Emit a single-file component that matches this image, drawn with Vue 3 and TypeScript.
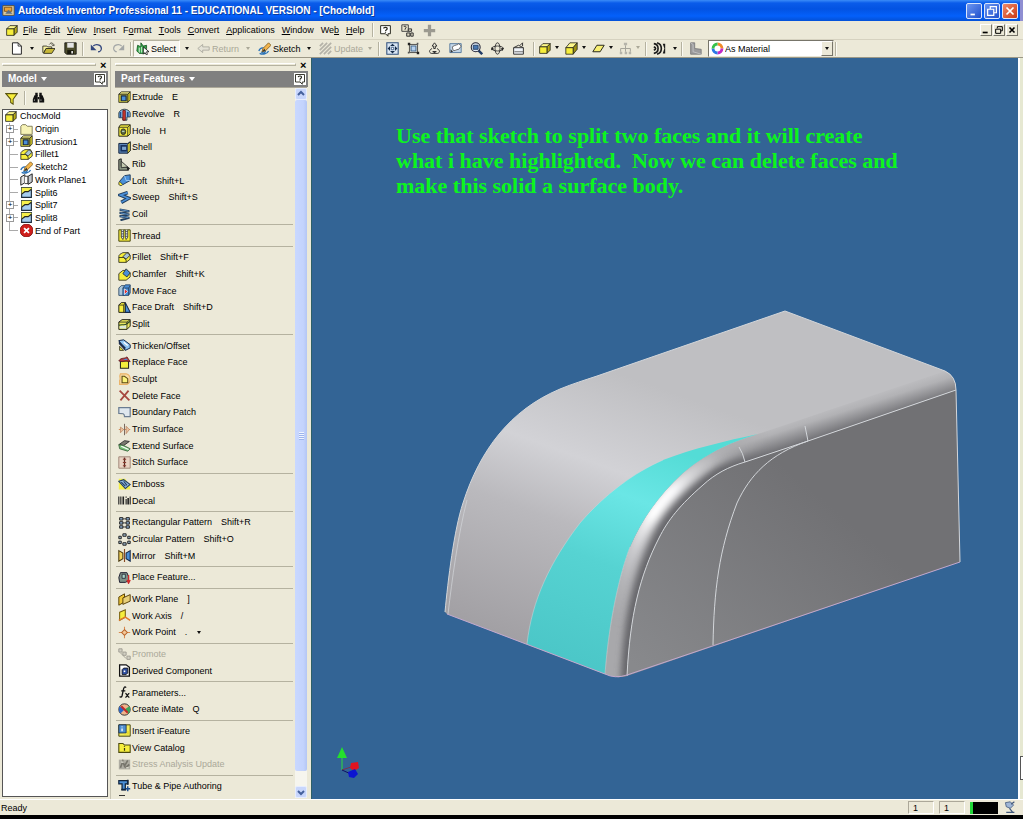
<script setup lang="ts">
import { ref } from 'vue'

type Shape = [d: string, fill?: string, stroke?: string, width?: number]
interface Feature { icon: string; label: string; key?: string; off?: boolean; more?: boolean }
interface TreeNode { icon: string; label: string; expandable?: boolean }

const Y = '#f6ee3c'
const K = '#26261c'
const B = '#4a8fd8'
const N = '#24405f'

const cube: Shape[] = [
  ['M2 6L6 2H15L11 6Z', '#fdf88a', K],
  ['M11 6L15 2V10L11 14Z', '#b8ac18', K],
  ['M2 6H11V14H2Z', Y, K],
]

const icons: Record<string, Shape[]> = {
  cube,
  app: [['M1 2H15V14H1Z', '#d7c9a0', '#5a4a2a'], ['M3 4H12V9H3Z', '#e8a33a', '#7a4a10'], ['M4 12L8 7L13 12Z', '#5d6f86']],
  help: [['M2 2H14V12H11V15L8 12H2Z', '#fff', K, 1.2], ['M5.5 5.5C6 3.5 10.500 3.500 10 6C9.800 7.300 8 7 8 9M8 10V11', 'none', K, 1.5]],
  whats: [['M1 1H9V9H1Z', '#e8e4cf', '#444', 1.2], ['M3.500 3.500C4 2 7 2.500 6 5L5 6V7', 'none', '#222', 1.2], ['M9 6H13V9H9ZM7 11H11V15H7ZM12 11H15V15H12Z', '#d8d4bf', '#333', 1.2]],
  plus: [['M6 1H10V6H15V10H10V15H6V10H1V6H6Z', '#9c9a90']],
  page: [['M3 1H10L14 5V15H3Z', '#fff', '#222', 1.2], ['M10 1V5H14', 'none', '#222']],
  open: [['M1 5H6L7 6H12V8H5L2 13H1Z', '#f6f0a0', K], ['M2 14L5 8H16L12 14Z', '#c8b838', K], ['M9 3C11 0 14 1 14 4M12 3L14 5L16 3', 'none', K]],
  save: [['M1 1H15V15H3L1 13Z', '#4c4c2c', '#111'], ['M4 1H12V7H4Z', '#e4e4e4'], ['M4 10H12V15H4Z', '#18180c'], ['M9 11H11V14H9Z', '#eee']],
  undo: [['M4 5C7 2 14 3 14 8C14 10 12 12 10 12', 'none', '#33477e', 1.6], ['M1 3V10H8Z', '#33477e']],
  redo: [['M12 5C9 2 2 3 2 8C2 10 4 12 6 12', 'none', '#a3a6a6', 1.4], ['M15 3V10H8Z', '#a3a6a6']],
  select: [['M2 4L6 6V1L9 5L13 4V8L11 14H4L1 11Z', '#36a84b', '#125421'], ['M4 7V13M7 6V13', 'none', '#fff'], ['M9 6V15L11 13L13 16L14 15L13 12H16Z', '#fff', '#111']],
  back: [['M1 8L7 3V6H15V10H7V13Z', '#e4e2d6', '#a5a49a']],
  sketch: [['M1 11C3 6 8 6 9 10C10 14 5 14 4 12M2 14C6 16 11 15 13 11', 'none', '#2b73b8', 1.6], ['M6 8L13 1L16 4L9 11L5 12Z', '#f4b44a', '#7a5a20'], ['M5 12L8 8L9 11Z', '#333']],
  update: [['M1 5L5 1M1 10L10 1M1 15L15 1M6 15L15 6M11 15L15 11', 'none', '#b4b2a8', 2]],
  zoomall: [['M1 1H15V15H1Z', '#d9e6f4', '#30507c', 1.3], ['M8 2L11 5H5ZM8 14L11 11H5ZM2 8L5 5V11ZM14 8L11 5V11Z', '#152c4a'], ['M6.500 6.500H9.500V9.500H6.500Z', '#fff', '#30507c']],
  zoomwin: [['M3 3H13V13H3Z', 'none', '#333', 1], ['M5 5H11V11H5Z', '#b8d2ee', '#456b95', 1.3], ['M1 1H4V4H1ZM12 12H15V15H12Z', '#222'], ['M12 1H14V3H12ZM1 12H3V14H1Z', '#555']],
  zoom: [['M8 1L11 5H9V8H7V5H5ZM5 8C1 10 1 13 4 14H12C15 13 15 10 11 8', 'none', '#333', 1.2], ['M5 11L8 14L11 11Z', '#333']],
  pan: [['M1 2H15V13H1Z', '#c5d7e8', '#456b95'], ['M4 6C8 3 11 4 12 2L15 5L12 9C9 9 6 12 5 10Z', '#fff', '#555'], ['M2 13V9L5 12Z', '#333']],
  zoomsel: [['M10 10L15 15', 'none', '#223c66', 3], ['M7 1A5.500 5.500 0 1 0 7 12A5.500 5.500 0 1 0 7 1Z', '#e3eef9', '#223', 1.3], ['M4 4H10V9H4Z', '#4a79b4', '#1c3558']],
  orbit: [['M8 1C12 1 12 15 8 15C4 15 4 1 8 1M1 8C1 4 15 4 15 8C15 12 1 12 1 8', 'none', '#333', 1.2], ['M6 6H10V10H6Z', '#ece9d8'], ['M1 6L4 9L0 10ZM12 8L16 7L14 11Z', '#222']],
  look: [['M2 7H14V15H2Z', '#eef3f8', '#333', 1.2], ['M2 7L8 4L14 7M10 4L13 1V5', 'none', '#333', 1.2], ['M3 12H14', 'none', '#555']],
  shaded: cube,
  solid: [['M1 7L6 1H15L10 7Z', '#fdf88a', K], ['M10 7L15 1V9L10 15Z', '#9a9012', K], ['M1 7H10V15H1Z', Y, K]],
  plane: [['M1 12L6 4H15L10 12Z', '#f8ef72', K, 1.2]],
  tree: [['M8 4V8M2 12V8H14V12M8 8V12', 'none', '#a5a49a', 1.2], ['M6 1H10V4H6ZM1 12H4V15H1ZM7 12H10V15H7ZM12 12H15V15H12Z', '#b5b4aa']],
  waves: [['M1 2C8 3 8 13 1 14M5 1C12 3 12 13 5 15M1 6C4 7 4 9 1 10', 'none', '#1c1c1c', 2], ['M12 2H15V14H12L14 8Z', '#1c1c1c']],
  corner: [['M2 1H7V8L15 9V15H2Z', '#9b9b9d', '#77777a'], ['M2 1L5 3V12L15 15', 'none', '#c7c7c9']],
  ring: [
    ['M8 2.500A5.500 5.500 0 0 1 13.500 8', 'none', '#f08a2a', 3.500],
    ['M13.500 8A5.500 5.500 0 0 1 8 13.500', 'none', '#c22ac8', 3.500],
    ['M8 13.500A5.500 5.500 0 0 1 2.500 8', 'none', '#2b78e6', 3.500],
    ['M2.500 8A5.500 5.500 0 0 1 8 2.500', 'none', '#35c24a', 3.500],
  ],
  filter: [['M1 2H15L10 9V15L7 13V9Z', '#f8ee3a', '#5a5410', 1.3]],
  binoc: [['M3 4H7V13H1V9ZM9 4H13L15 9V13H9Z', '#111'], ['M4 1H7V5H4ZM9 1H12V5H9ZM7 6H9V9H7Z', '#111'], ['M3 9V11M11 9V11', 'none', '#aaa']],
  folder: [['M1 4L3 2H7L9 4H15V14H1Z', '#f7f3b6', '#6b6740']],
  extrude: [['M1 4L4 1H15L12 4Z', '#faf48a', K], ['M12 4L15 1V11L12 14Z', '#e8dc2a', K], ['M1 4H12V14H1Z', '#e6dd3c', K], ['M4 6H10V12H4Z', B, '#14284a', 1.5]],
  fillet: [['M1 7C1 4 3 4 6 2H13L15 6V10L10 14H1Z', Y, K], ['M6 7L11 2L15 5L10 10Z', '#a8c4d8', K], ['M1 8H7L10 11V14', 'none', K]],
  chamfer: [['M1 7L6 3H11L15 6V11L10 15H1Z', Y, K], ['M6 7L10 1L15 6L11 11Z', B, K]],
  wplane: [['M1 5L6 2V12L1 15Z', '#e6e6e6', '#222', 1.2], ['M6 4H10V13H6', '#fafafa', '#222'], ['M10 4L15 1V11L10 14Z', '#c4c9cf', '#222', 1.2]],
  tsplit: [['M2 2H14V14H2Z', '#a6cdf0', '#1c2c3c', 1.4], ['M2 2H14V4L10 7H6L2 10Z', '#f6f04a'], ['M2 10L6 7H10L14 4', 'none', K, 1.4]],
  stop: [['M8 0A8 8 0 1 0 8 16A8 8 0 1 0 8 0Z', '#cf1f1c', '#7c0c0a'], ['M5 5L11 11M11 5L5 11', 'none', '#fff', 2.200]],
  revolve: [['M1 6C3 0 13 0 15 6V11H11V15H6V12H1Z', '#8ab8e8', '#233'], ['M6 3H9V15H6Z', '#d33a30', '#611'], ['M3 5V12M12 5V11', 'none', '#1d4f93', 2]],
  hole: [['M1 4L3 1H15V12L12 15H1Z', Y, K, 1.2], ['M1 4H12V15M12 4L15 1', 'none', K], ['M6.500 6A3 3.500 0 1 0 6.500 13A3 3.500 0 1 0 6.500 6Z', '#5f6d40', '#222'], ['M5 9H8', 'none', '#dff']],
  shell: [['M1 3H12L15 1V12L12 15H1Z', '#5c86b8', '#142440', 1.2], ['M12 4L15 1V12L12 15Z', '#e8df3a', K], ['M3 5H11V13H3Z', '#16305e'], ['M5 7H10V11H5Z', '#7ca4cf']],
  rib: [['M1 2L4 1V10L13 12V15H1Z', '#8f9a86', '#222', 1.2], ['M4 4L12 11L4 12Z', '#c4cbb0', '#222'], ['M11 10L15 13L11 15Z', '#222']],
  loft: [['M1 12C1 7 6 8 6 12C6 15 1 15 1 12Z', Y, K], ['M2 9L8 2L15 1V8L6 13Z', B, N, 1.2], ['M8 2L10 8L15 8', 'none', '#a8d0f4']],
  sweep: [['M12 2L3 5L13 9L4 14', 'none', N, 4.500], ['M12 2L3 5L13 9L4 14', 'none', B, 2]],
  coil: [['M2 2L14 4L2 6L14 8L2 10L14 12L3 15', 'none', N, 2.600], ['M3 2L13 4M3 6L13 8M3 10L13 12', 'none', '#6aa4dc', 1]],
  thread: [['M1 1H15V15H1Z', Y, '#4a4810', 1.2], ['M4 1V10L6 13L7 10V1M9 1V10L10 13L12 10V1', '#dce4ea', '#333'], ['M4 3H7M4 6H7M9 3H12M9 6H12M4 9H7M9 9H12', 'none', '#444']],
  moveface: [['M1 5L4 2H8V14H1Z', '#a9c6dc', N], ['M6 5L9 1H15V11L13 14H6Z', B, N], ['M6 5H13L15 2M13 5V14', 'none', N], ['M8 6L12 9L8 13Z', '#e03030', '#fff', .8]],
  draft: [['M1 5L4 2H9V14H1Z', Y, K, 1.2], ['M9 2L15 14H9Z', B, '#14284a', 1.3], ['M1 5H7L9 2M7 5V14', 'none', K]],
  split: [['M1 5L5 2H15V10L11 14H1Z', '#e9e65c', K, 1.2], ['M1 9C5 7 8 10 11 7L15 4', 'none', '#2a4a2a', 1.4], ['M1 5H11V14M11 5L15 2', 'none', K], ['M2 10L10 9V13H2Z', '#dce8d8']],
  thicken: [['M1 2L7 1L15 7V11L9 14Z', '#8fc4f0', '#14284a', 1.2], ['M1 2L9 10V14L1 6Z', '#1c2c4c'], ['M2 9L7 14H2Z', Y, K], ['M7 4L12 8', 'none', '#fff', 1.4]],
  replace: [['M3 6H13V15H3Z', Y, K, 1.3], ['M1 6C4 1 9 4 11 1L15 7L10 6L5 7Z', '#b63a3e', '#5a1a20'], ['M6 5L10 3L12 5Z', '#4b8fd8']],
  sculpt: [['M3 1H10C17 3 16 12 11 14H2V9C4 7 1 5 3 1Z', '#f8dca6', '#eab266', 1.4], ['M5 4H8L12 7V12H5Z', '#fbf27a', '#5a4a10', 1.3]],
  delete: [['M2 2L14 14M13 2L3 14', 'none', '#a84840', 2.200]],
  patch: [['M1 2H15V13H8C8 9 6 9 1 9Z', '#dfe7ee', '#6a7c92', 1.5]],
  trim: [['M1 8H15', 'none', '#d58a58', 1.3], ['M8 1V15', 'none', '#7a6a60', 1.3], ['M3 5L7 8L3 12ZM10 4L14 8L10 13Z', '#e9c3a0', '#c08a68']],
  extend: [['M1 7L8 2L14 3L7 8Z', '#7a7a70', '#222'], ['M1 7L7 8L15 12L12 15L2 12Z', '#7ac47a', '#35603a'], ['M4 9L13 13', 'none', '#fff', 1.4]],
  stitch: [['M1 1H15V15H1Z', '#ead4c4', '#a08878', 1.2], ['M8 2V14', 'none', '#5a2a20', 1.6], ['M6 4H10M6 8H10M6 12H10', 'none', '#8a3a30', 1.4]],
  emboss: [['M1 1H9L15 11V14H1Z', '#f4f04a'], ['M1 4L7 2L15 8L9 13Z', '#8fb8e0', N, 1.3], ['M4 5L9 10M7 4L11 9', 'none', N, 1.4]],
  decal: [['M1 3V13M3.500 3V13M10 6V13M15 3V13', 'none', '#222', 1.4], ['M6.500 3V13M12.500 5V13', 'none', '#222', 2], ['M10 3V4.500', 'none', '#222', 1.4]],
  rect: [['M2 2H6V5H2ZM10 2H14V5H10ZM2 7H6V10H2ZM10 7H14V10H10ZM2 12H6V15H2ZM10 12H14V15H10Z', '#8fb0d4', '#222', 1.2], ['M6 3.500H10M6 8.500H10M6 13.500H10', 'none', '#222']],
  circ: [['M6 1H10V4H6ZM1 4H4V7H1ZM12 4H15V7H12ZM1 10H4V13H1ZM12 10H15V13H12ZM6 12H10V15H6Z', '#9db8cc', '#222', 1.2]],
  mirror: [['M1 2L6 5V12L1 15Z', '#f2d25a', '#4a3a10', 1.3], ['M8 0V16', 'none', '#8a4a20', 1.4], ['M15 2L10 5V12L15 15Z', B, '#14284a', 1.3]],
  place: [['M1 8L3 2H11L13 7V12L9 14H2Z', '#7d8f86', '#223', 1.2], ['M5 4H9V9H5Z', '#a8d4c8', '#223'], ['M13 5V13M11 11L13 15L15 11', 'none', '#d02828', 1.6]],
  workplane: [['M1 5L8 1V11L1 15Z', '#f0c838', '#5a4208', 1.2], ['M6 6L15 2V10L6 14Z', '#e8cf78', '#5a4208', 1.2]],
  workaxis: [['M2 4L9 1V10L2 14Z', Y, '#7a6210', 1.3], ['M1 14L9 10L15 14', 'none', '#e07a2a', 1.8]],
  workpoint: [['M8 1V15M1 8H15', 'none', '#d98a4e', 1.3], ['M8 4.500L11.500 8L8 11.500L4.500 8Z', '#f2c898', '#b8622a', 1.3]],
  promote: [['M1 1H5V5H1ZM6 5H10V9H6ZM11 10H15V14H11Z', '#d4d1c4', '#a09e94', 1.2], ['M3 6L10 13', 'none', '#a09e94', 1.2]],
  derived: [['M2 1H10L14 4V15H2Z', '#fff', '#111', 1.6], ['M5 7L7 5H12V11L10 13H5Z', '#2c4c9c', '#111'], ['M7 8H9V10H7Z', '#fff']],
  params: [['M10 2C8 0 7 2 6.500 5L5 12C4.500 14 3 14 2 13M4 6H9', 'none', '#111', 1.6], ['M9 9C11 9 12 14 14 14M14 9C12 9 11 14 9 14', 'none', '#111', 1.4]],
  imate: [['M8 1A7 7 0 1 0 8 15A7 7 0 1 0 8 1Z', '#f0b48a', '#333', 1.2], ['M2 4L8 8L3 13C0 10 1 6 2 4Z', '#2c66c4'], ['M14 4L8 8L13 13C16 10 15 6 14 4Z', '#3ca858'], ['M4 4L12 12', 'none', '#c02a2a', 2.400]],
  ifeature: [['M1 1H15V15H1Z', '#f4ec5a', '#4a4810', 1.2], ['M1 1H10V11H1Z', '#4f8fd0', '#14284a'], ['M5 3V4M5 5.500V9', 'none', '#fff', 1.6], ['M11 9H14V13H7V12H11Z', '#e8dc2a']],
  catalog: [['M1 3H6L8 5H15V14H1Z', Y, '#4a4810', 1.3], ['M8 6V7M8 8.500V12', 'none', '#3a3810', 1.5]],
  stress: [['M1 2H15V14H1Z', '#aeaca2'], ['M3 12L6 4L8 10L12 3M9 12L14 8', 'none', '#77756c', 2], ['M4 5H7M10 12H13', 'none', '#e8e6da', 1.4]],
  tube: [['M1 2H12V6H9V13H5V6H1Z', B, '#10243e', 1.5], ['M12 1V7M4 13H10', 'none', '#10243e', 2], ['M12 9V15M9.500 12H15', 'none', '#1c4f93', 1.8]],
}

const menus: [string, string, string][] = [
  ['', 'F', 'ile'], ['', 'E', 'dit'], ['', 'V', 'iew'], ['', 'I', 'nsert'], ['F', 'o', 'rmat'], ['', 'T', 'ools'],
  ['', 'C', 'onvert'], ['', 'A', 'pplications'], ['', 'W', 'indow'], ['We', 'b', ''], ['', 'H', 'elp'],
]

const commands = [
  { icon: 'select', label: 'Select', on: true },
  { icon: 'back', label: 'Return', off: true },
  { icon: 'sketch', label: 'Sketch' },
  { icon: 'update', label: 'Update', off: true },
]
const viewTools = [
  ['zoomall', 'Zoom All'], ['zoomwin', 'Zoom Window'], ['zoom', 'Zoom'], ['pan', 'Pan'],
  ['zoomsel', 'Zoom Selected'], ['orbit', 'Rotate'], ['look', 'Look At'],
]
const displayTools = [['shaded', 'Shaded Display'], ['solid', 'Camera'], ['plane', 'Ground Shadow'], ['tree', 'Component Opacity']]

const tree: TreeNode[] = [
  { icon: 'folder', label: 'Origin', expandable: true },
  { icon: 'extrude', label: 'Extrusion1', expandable: true },
  { icon: 'fillet', label: 'Fillet1' },
  { icon: 'sketch', label: 'Sketch2' },
  { icon: 'wplane', label: 'Work Plane1' },
  { icon: 'tsplit', label: 'Split6' },
  { icon: 'tsplit', label: 'Split7', expandable: true },
  { icon: 'tsplit', label: 'Split8', expandable: true },
  { icon: 'stop', label: 'End of Part' },
]

const groups: Feature[][] = [
  [
    { icon: 'extrude', label: 'Extrude', key: 'E' }, { icon: 'revolve', label: 'Revolve', key: 'R' },
    { icon: 'hole', label: 'Hole', key: 'H' }, { icon: 'shell', label: 'Shell' }, { icon: 'rib', label: 'Rib' },
    { icon: 'loft', label: 'Loft', key: 'Shift+L' }, { icon: 'sweep', label: 'Sweep', key: 'Shift+S' }, { icon: 'coil', label: 'Coil' },
  ],
  [{ icon: 'thread', label: 'Thread' }],
  [
    { icon: 'fillet', label: 'Fillet', key: 'Shift+F' }, { icon: 'chamfer', label: 'Chamfer', key: 'Shift+K' },
    { icon: 'moveface', label: 'Move Face' }, { icon: 'draft', label: 'Face Draft', key: 'Shift+D' }, { icon: 'split', label: 'Split' },
  ],
  [
    { icon: 'thicken', label: 'Thicken/Offset' }, { icon: 'replace', label: 'Replace Face' }, { icon: 'sculpt', label: 'Sculpt' },
    { icon: 'delete', label: 'Delete Face' }, { icon: 'patch', label: 'Boundary Patch' }, { icon: 'trim', label: 'Trim Surface' },
    { icon: 'extend', label: 'Extend Surface' }, { icon: 'stitch', label: 'Stitch Surface' },
  ],
  [{ icon: 'emboss', label: 'Emboss' }, { icon: 'decal', label: 'Decal' }],
  [
    { icon: 'rect', label: 'Rectangular Pattern', key: 'Shift+R' }, { icon: 'circ', label: 'Circular Pattern', key: 'Shift+O' },
    { icon: 'mirror', label: 'Mirror', key: 'Shift+M' },
  ],
  [{ icon: 'place', label: 'Place Feature...' }],
  [
    { icon: 'workplane', label: 'Work Plane', key: ']' }, { icon: 'workaxis', label: 'Work Axis', key: '/' },
    { icon: 'workpoint', label: 'Work Point', key: '.', more: true },
  ],
  [{ icon: 'promote', label: 'Promote', off: true }, { icon: 'derived', label: 'Derived Component' }],
  [{ icon: 'params', label: 'Parameters...' }, { icon: 'imate', label: 'Create iMate', key: 'Q' }],
  [
    { icon: 'ifeature', label: 'Insert iFeature' }, { icon: 'catalog', label: 'View Catalog' },
    { icon: 'stress', label: 'Stress Analysis Update', off: true },
  ],
  [{ icon: 'tube', label: 'Tube & Pipe Authoring' }],
]

const note = `Use that sketch to split two faces and it will create
what i have highlighted.  Now we can delete faces and
make this solid a surface body.`

const color = ref('As Material')

const Icon = (props: { name: string }) =>
  h('svg', { class: 'icon', viewBox: '0 0 16 16', 'aria-hidden': 'true' },
    (icons[props.name] ?? []).map(([d, fill = 'none', stroke = 'none', width = 1]) =>
      h('path', { d, fill, stroke, 'stroke-width': width })))
Icon.props = ['name']
</script>

<script lang="ts">
import { h } from 'vue'
</script>

<template>
  <div class="window">
    <header class="titlebar">
      <Icon name="app" />
      <h1>Autodesk Inventor Professional 11 - EDUCATIONAL VERSION - [ChocMold]</h1>
      <div class="caption">
        <button aria-label="Minimize"><svg viewBox="0 0 16 16"><path d="M4 11H9V13H4Z" fill="#fff" /></svg></button>
        <button aria-label="Restore"><svg viewBox="0 0 16 16"><path d="M6 6V3H13V10H10M3 6H10V13H3Z" fill="none" stroke="#fff" stroke-width="1.400" /></svg></button>
        <button class="close" aria-label="Close"><svg viewBox="0 0 16 16"><path d="M4 4L12 12M12 4L4 12" stroke="#fff" stroke-width="2" /></svg></button>
      </div>
    </header>

    <nav class="menubar" aria-label="Menu">
      <Icon name="cube" />
      <button v-for="m in menus" :key="m.join('')" class="menu">{{ m[0] }}<u>{{ m[1] }}</u>{{ m[2] }}</button>
      <i class="rule"></i>
      <button class="tool" aria-label="Help Topics"><Icon name="help" /></button>
      <button class="tool" aria-label="What's New"><Icon name="whats" /></button>
      <button class="tool" aria-label="Add"><Icon name="plus" /></button>
      <div class="child">
        <button aria-label="Minimize document"><svg viewBox="0 0 12 12"><path d="M2 9H8" stroke="#000" stroke-width="2" /></svg></button>
        <button aria-label="Restore document"><svg viewBox="0 0 12 12"><path d="M4 4V2H10V7H8M2 5H8V10H2Z" fill="none" stroke="#000" stroke-width="1.200" /></svg></button>
        <button aria-label="Close document"><svg viewBox="0 0 12 12"><path d="M3 3L9 9M9 3L3 9" stroke="#000" stroke-width="2" /></svg></button>
      </div>
    </nav>

    <div class="toolbar" role="toolbar" aria-label="Standard">
      <button class="tool" aria-label="New"><Icon name="page" /></button>
      <button class="drop" aria-label="New options"></button>
      <button class="tool" aria-label="Open"><Icon name="open" /></button>
      <button class="tool" aria-label="Save"><Icon name="save" /></button>
      <i class="rule"></i>
      <button class="tool" aria-label="Undo"><Icon name="undo" /></button>
      <button class="tool" aria-label="Redo" disabled><Icon name="redo" /></button>
      <i class="rule"></i>
      <template v-for="c in commands" :key="c.label">
        <button class="command" :class="{ on: c.on }" :disabled="c.off"><Icon :name="c.icon" />{{ c.label }}</button>
        <button class="drop wide" :disabled="c.off" :aria-label="c.label + ' options'"></button>
      </template>
      <i class="rule"></i>
      <div class="views">
        <button v-for="v in viewTools" :key="v[0]" class="tool" :aria-label="v[1]"><Icon :name="v[0]" /></button>
      </div>
      <i class="rule"></i>
      <div v-for="v in displayTools" :key="v[0]" class="display">
        <button class="tool" :aria-label="v[1]" :disabled="v[0] === 'tree'"><Icon :name="v[0]" /></button>
        <button class="drop" :aria-label="v[1] + ' options'" :disabled="v[0] === 'tree'"></button>
      </div>
      <i class="rule"></i>
      <button class="tool" aria-label="Analysis"><Icon name="waves" /></button>
      <button class="drop" aria-label="Analysis options"></button>
      <i class="rule"></i>
      <button class="tool" aria-label="Section"><Icon name="corner" /></button>
      <label class="material">
        <Icon name="ring" />
        <select v-model="color" aria-label="Color"><option>As Material</option></select>
        <span class="drop"></span>
      </label>
      <i class="rule"></i>
    </div>

    <main class="work">
      <aside class="panel">
        <div class="grip"><i></i><button aria-label="Close Model">×</button></div>
        <div class="heading"><button class="name">Model</button><button class="ask" aria-label="Model help"><Icon name="help" /></button></div>
        <div class="filters">
          <button aria-label="Filter"><Icon name="filter" /></button><i class="rule"></i><button aria-label="Find"><Icon name="binoc" /></button>
        </div>
        <div class="browser">
          <ul class="tree">
            <li class="root"><Icon name="cube" /><span>ChocMold</span></li>
            <li v-for="n in tree" :key="n.label" class="node">
              <span class="branch"><button v-if="n.expandable" :aria-label="'Expand ' + n.label">+</button></span>
              <Icon :name="n.icon" /><span>{{ n.label }}</span>
            </li>
          </ul>
        </div>
      </aside>

      <aside class="panel features">
        <div class="grip"><i></i><button aria-label="Close Part Features">×</button></div>
        <div class="heading"><button class="name">Part Features</button><button class="ask" aria-label="Part Features help"><Icon name="help" /></button></div>
        <div class="scroller">
          <div class="list">
            <template v-for="(g, i) in groups" :key="i">
              <hr v-if="i > 0" />
              <button v-for="f in g" :key="f.label" class="feature" :disabled="f.off">
                <Icon :name="f.icon" />{{ f.label }}<kbd v-if="f.key">{{ f.key }}</kbd><span v-if="f.more" class="drop"></span>
              </button>
            </template>
            <div class="next"></div>
          </div>
          <div class="scrollbar">
            <button aria-label="Scroll up"><svg viewBox="0 0 12 12"><path d="M3 7L6 4L9 7" /></svg></button>
            <div class="thumb"></div>
            <div class="track"></div>
            <button aria-label="Scroll down"><svg viewBox="0 0 12 12"><path d="M3 5L6 8L9 5" /></svg></button>
          </div>
        </div>
      </aside>

      <section class="viewport">
        <svg class="scene" viewBox="312 58 706 741" preserveAspectRatio="xMinYMin meet" role="img" aria-label="Mold solid with highlighted face">
          <defs>
            <linearGradient id="skin" gradientUnits="userSpaceOnUse" x1="600" y1="366" x2="501" y2="639">
              <stop offset="0" stop-color="#bfbfc2" /><stop offset=".32" stop-color="#d2d2d6" />
              <stop offset=".55" stop-color="#bab9bd" /><stop offset="1" stop-color="#a19fa3" />
            </linearGradient>
            <linearGradient id="cyan" gradientUnits="userSpaceOnUse" x1="650" y1="440" x2="565" y2="665">
              <stop offset="0" stop-color="#54dcd6" /><stop offset=".25" stop-color="#6ae6e5" />
              <stop offset=".55" stop-color="#56d3d2" /><stop offset="1" stop-color="#4bc6c7" />
            </linearGradient>
            <linearGradient id="side" gradientUnits="userSpaceOnUse" x1="640" y1="670" x2="800" y2="480">
              <stop offset="0" stop-color="#88898c" /><stop offset="1" stop-color="#717174" />
            </linearGradient>
            <linearGradient id="round" gradientUnits="userSpaceOnUse" x1="846" y1="401" x2="854" y2="426">
              <stop offset="0" stop-color="#bfbfc2" /><stop offset=".35" stop-color="#b2b2b5" /><stop offset="1" stop-color="#737377" />
            </linearGradient>
            <linearGradient id="glow" gradientUnits="userSpaceOnUse" x1="612" y1="620" x2="745" y2="450">
              <stop offset="0" stop-color="#b5b5b8" stop-opacity="0" /><stop offset=".3" stop-color="#dcdce0" stop-opacity=".6" />
              <stop offset=".5" stop-color="#fff" /><stop offset=".65" stop-color="#fafafc" />
              <stop offset="1" stop-color="#bfbfc2" stop-opacity="0" />
            </linearGradient>
            <linearGradient id="fade" gradientUnits="userSpaceOnUse" x1="710" y1="0" x2="768" y2="0">
              <stop offset="0" stop-color="#fff" /><stop offset="1" stop-color="#000" />
            </linearGradient>
            <filter id="soft" x="-20%" y="-20%" width="140%" height="140%"><feGaussianBlur stdDeviation="3" /></filter>
            <mask id="blend" maskUnits="userSpaceOnUse" x="590" y="420" width="190" height="270">
              <path d="M590 420H780V690H590Z" fill="url(#fade)" />
            </mask>
            <clipPath id="band">
              <path d="M605 674C609 620 620 573 630 547C643 517 660 494 683 473C705 455 725 444 758 434L770 430L775 452L745 462C728 467 715 474 703 485C680 505 668 520 659 538C640 575 630 615 627 676Q615 679 605 674Z" />
            </clipPath>
          </defs>
          <path d="M445 612C448 580 454 530 463 503C480 450 510 410 560 389C572 384 585 380 597 376L785 311L945 371Q956 376 956 390L700 500L605 674L447 614Z" fill="url(#skin)" />
          <path d="M605 674C609 620 620 573 630 547C643 517 660 494 683 473C705 455 725 444 758 434L945 371Q956 376 956 390L808 441L745 462L627 676Q615 679 605 674Z" fill="url(#round)" />
          <g mask="url(#blend)">
            <g clip-path="url(#band)">
              <path d="M600 430H775V680H600Z" fill="#a8a8ab" />
              <path d="M627 680C630 615 640 575 659 538C668 520 680 505 703 485C715 474 728 467 745 462L780 450" fill="none" stroke="#66666b" stroke-width="13" filter="url(#soft)" />
              <path d="M612 640C616 600 626 565 640 535C653 510 670 490 693 472C706 461 723 452 750 444" fill="none" stroke="url(#glow)" stroke-width="14" filter="url(#soft)" />
            </g>
          </g>
          <path d="M627 676C630 615 640 575 659 538C668 520 680 505 703 485C715 474 728 467 745 462L808 441L956 390L960 562Z" fill="url(#side)" />
          <path d="M527 644C532 600 550 562 580 523C605 494 635 472 663 460C695 448 725 441 758 434C725 444 705 455 683 473C660 494 643 517 630 547C620 573 609 620 605 674Z" fill="url(#cyan)" />
          <g class="edges">
            <path d="M448 614C452 580 458 535 467 500" opacity=".7" />
            <path d="M445 612C448 580 454 530 463 503C480 450 510 410 560 389C572 384 585 380 597 376L785 311L945 371Q956 376 956 390L960 562" />
            <path d="M627 676C630 615 640 575 659 538C668 520 680 505 703 485C715 474 728 467 745 462L808 441L956 390" />
            <path d="M713 645C714 590 719 550 737 503C750 475 770 454 808 441L805 426M745 462Q743 453 739 447" />
            <path d="M527 644C532 600 550 562 580 523C605 494 635 472 663 460M605 674C609 620 620 573 630 547" opacity=".5" />
            <path d="M447 614L605 674Q615 679 627 675L960 562" class="base" />
          </g>
          <path d="M342 757V770" stroke="#2fdc3a" /><path d="M342 747L347 758H337Z" fill="#24e02c" />
          <path d="M342 770L354 766" stroke="#7a3450" /><path d="M342 770L353 775" stroke="#101060" />
          <path d="M351 763L358 762L359 768L354 771L350 768Z" fill="#e01420" />
          <path d="M348 772L355 769L358 774L354 778L349 777Z" fill="#0c14d0" />
        </svg>
        <p class="note">{{ note }}</p>
      </section>
      <div class="edge"><i></i></div>
    </main>

    <footer class="status">
      <span class="ready">Ready</span>
      <output>1</output><output>1</output>
      <span class="meter"></span>
      <svg class="link" viewBox="0 0 16 16"><path d="M3 2L9 1L13 5L9 9L4 7Z" fill="#9fb6d6" stroke="#40587c" /><path d="M8 9L12 14M4 14H14M10 4L14 1" fill="none" stroke="#40587c" stroke-width="1.500" /></svg>
    </footer>
  </div>
</template>

<style>
body { background: #ece9d8; }
.icon { flex: none; width: 13px; height: 13px; display: block; }
</style>

<style scoped>
.window { display: flex; flex-direction: column; height: 100vh; overflow: hidden; background: #ece9d8; border-bottom: 4px solid #000; box-sizing: border-box; font: 9px/12px "Liberation Sans", Arial, sans-serif; color: #000; }
.window * { box-sizing: border-box; }
button, select { font: inherit; color: inherit; background: none; border: 0; padding: 0; margin: 0; }
button { display: flex; align-items: center; white-space: nowrap; }
ul, h1, p, hr { margin: 0; padding: 0; }
u { text-underline-offset: 1px; }

.titlebar { flex: none; display: flex; align-items: center; gap: 3px; height: 21px; padding: 0 2px; background: linear-gradient(#3b8cf8 0, #0a5cea 3px, #0353e2 9px, #0460fb 16px, #0453dc 20px); border-right: 3px solid #8f8ed2; }
h1 { flex: 1; font: bold 10px/20px "Liberation Sans", Arial, sans-serif; color: #fff; text-shadow: 1px 1px #0a3a9c; white-space: nowrap; }
.caption { display: flex; gap: 2px; }
.caption button { width: 16px; height: 16px; border: 1px solid #dbe6fb; border-radius: 2px; background: linear-gradient(135deg, #6c97f2, #2050cc); }
.caption .close { background: linear-gradient(135deg, #ee8a6a, #cc3a14); }
.caption svg { width: 100%; }

.menubar { flex: none; display: flex; align-items: center; height: 19px; padding: 0 5px; border-bottom: 1px solid #d6d2c0; }
.menubar > .icon { margin-right: 5px; }
.menu { margin-right: 7px; }
.rule { flex: none; width: 2px; height: 14px; margin: 0 1px; border-left: 1px solid #b5b2a0; border-right: 1px solid #fbfaf3; }
.tool { justify-content: center; width: 22px; height: 16px; }
.menubar .rule { margin: 0 1px 0 0; }
.child { display: flex; gap: 1px; margin-left: auto; }
.child button { width: 12px; height: 12px; border: 1px solid; border-color: #fff #77756a #77756a #fff; }

.toolbar { flex: none; display: flex; align-items: center; height: 18px; padding-left: 5px; border-bottom: 1px solid #9b9886; }
.drop { position: relative; flex: none; justify-content: center; width: 10px; height: 14px; }
.drop::after { content: ""; border: 2px solid transparent; border-top: 3px solid #111; border-bottom: 0; }
.drop:disabled::after { border-top-color: #aaa898; }
.drop.wide { width: 14px; }
.command { width: 47px; height: 17px; gap: 2px; padding-left: 3px; }
.command.on { background: #f8f6ee; border: 1px solid; border-color: #b5b2a0 #fff #fff #b5b2a0; padding-left: 2px; }
button:disabled { color: #aaa898; }
.views { display: flex; padding: 0 3px 0 1px; }
.views .tool { width: 21px; }
.display { display: flex; padding-right: 3px; }
.display .tool { width: 17px; }
.display .drop { width: 7px; }
.material { display: flex; align-items: center; gap: 1px; width: 126px; height: 17px; margin-left: 2px; padding-left: 2px; background: #fff; border: 1px solid; border-color: #77756a #e8e5d6 #e8e5d6 #77756a; }
.material select { flex: 1; appearance: none; outline: 0; }
.material .drop { display: flex; align-items: center; align-self: stretch; width: 12px; height: auto; background: #ece9d8; border: 1px solid; border-color: #fff #77756a #77756a #fff; }

.work { flex: 1; min-height: 0; display: grid; grid-template-columns: 111px 201px 1fr 5px; }
.panel { display: flex; flex-direction: column; min-width: 0; min-height: 0; padding: 0 2px 2px 2px; border-right: 1px solid #c5c2b0; }
.features { padding: 0 3px 1px 4px; border-right: 1px solid #2f5f68; }
.grip { flex: none; display: flex; align-items: center; gap: 4px; height: 13px; }
.grip i { flex: 1; height: 3px; border: 1px solid; border-color: #fff #b5b2a0 #b5b2a0 #fff; }
.grip button { width: 8px; font: bold 11px/12px "Liberation Sans", Arial, sans-serif; }
.heading { flex: none; display: flex; align-items: center; justify-content: space-between; height: 16px; padding: 0 2px 0 6px; background: #808080; color: #fff; }
.name { gap: 4px; font: bold 10px/16px "Liberation Sans", Arial, sans-serif; }
.name::after { content: ""; border: 3px solid transparent; border-top: 4px solid #fff; border-bottom: 0; }
.ask { background: #fff; }
.ask .icon { width: 12px; height: 12px; }
.filters { flex: none; display: flex; align-items: center; height: 22px; padding-left: 3px; gap: 5px; }
.browser { flex: 1; min-height: 0; background: #fff; border: 1px solid #555; }
.tree { display: flex; flex-direction: column; height: 127px; list-style: none; }
.tree li { flex: 1; display: flex; align-items: center; gap: 3px; min-height: 0; }
.root { padding-left: 1px; }
.node { padding-left: 2px; }
.tree .node { gap: 2px; }
.branch { position: relative; align-self: stretch; width: 13px; background: linear-gradient(#aaa, #aaa) 4px 50% / 9px 1px no-repeat, linear-gradient(#aaa, #aaa) 4px 0 / 1px 100% no-repeat; display: flex; align-items: center; }
.node:last-child .branch { background: linear-gradient(#aaa, #aaa) 4px 50% / 9px 1px no-repeat, linear-gradient(#aaa, #aaa) 4px 0 / 1px 50% no-repeat; }
.branch button { justify-content: center; width: 8px; height: 8px; margin-left: 1px; background: #fff; border: 1px solid #999; font: 8px/6px "Liberation Sans", Arial, sans-serif; }

.scroller { flex: 1; min-height: 0; display: flex; margin-right: 1px; border-top: 1px solid #aca899; }
.list { flex: 1; display: flex; flex-direction: column; min-width: 0; overflow: hidden; padding: 1px 0 0 3px; }
.feature { flex: 1 1 12px; min-height: 12px; gap: 1px; }
kbd { font: inherit; margin-left: 8px; }
.feature .drop { display: flex; align-items: center; margin-left: 6px; }
hr { flex: none; height: 5px; margin: 0 2px 0 -2px; border: 0; background: linear-gradient(#b5b2a0, #b5b2a0) 0 2px / 100% 1px no-repeat; }
.next { flex: none; height: 3px; width: 6px; border-top: 1px solid #333; margin: 1px 0 0 1px; }
.scrollbar { flex: none; display: flex; flex-direction: column; width: 12px; background: #f6f5ee; }
.scrollbar button { justify-content: center; height: 12px; background: #c8d6fc; border-radius: 2px; border: 1px solid #e6edff; }
.scrollbar svg { width: 12px; height: 12px; fill: none; stroke: #45619d; stroke-width: 2px; flex: none; }
.thumb { flex: 1; background: repeating-linear-gradient(#eef4ff 0 1px, #9db4ec 1px 2px) 50% 50% / 5px 8px no-repeat, linear-gradient(90deg, #c9d8ff, #c3d3fd 70%, #b4c6f4); border-radius: 2px; }
.track { flex: none; height: 15px; }

.viewport { position: relative; min-width: 0; background: #336495; padding: 65px 0 0 84px; overflow: hidden; }
.scene { position: absolute; inset: 0; width: 100%; height: 100%; }
.edges path { fill: none; stroke: #d3d6da; stroke-width: 1px; }
.edges .base { stroke: #c3a9cf; }
.note { position: relative; white-space: pre; font: bold 22px/25px "Liberation Serif", "Times New Roman", serif; color: #0cf51d; }
.edge { display: flex; align-items: flex-end; border-left: 2px solid #fff; background: #e6e8d2; padding-bottom: 19px; }
.edge i { width: 3px; height: 24px; border: 1px solid #555; border-right: 0; background: #fff; }

.status { flex: none; display: flex; align-items: center; gap: 5px; height: 16px; padding: 0 7px 0 0; border-top: 1px solid #fff; }
.ready { flex: 1; padding-left: 1px; }
.status output { width: 26px; height: 13px; padding-left: 4px; border: 1px solid; border-color: #aca899 #fff #fff #aca899; }
.meter { width: 28px; height: 12px; background: #000; border-left: 3px solid #22d83a; }
.link { width: 13px; height: 13px; }
</style>
